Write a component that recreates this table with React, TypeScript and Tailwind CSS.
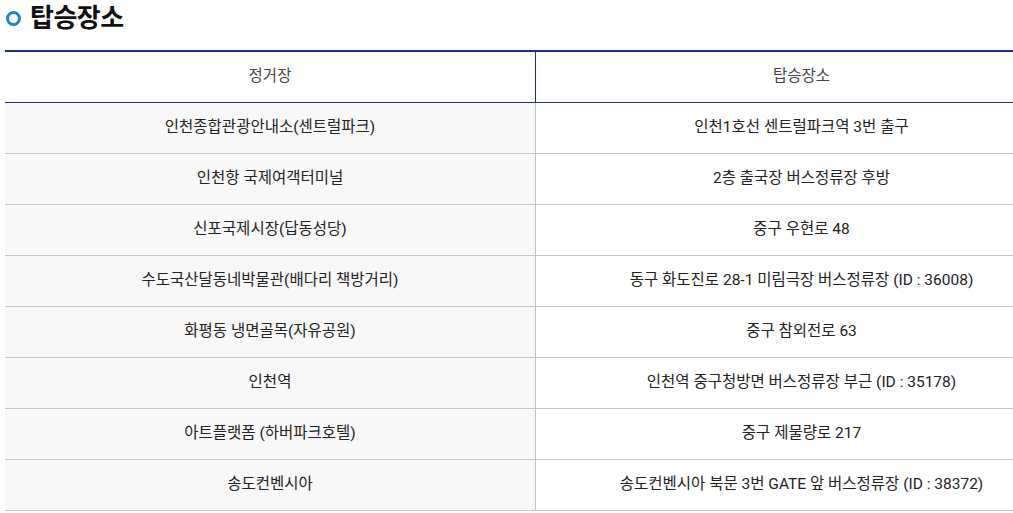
import React from "react";

const rows: [string, string][] = [
  ["인천종합관광안내소(센트럴파크)", "인천1호선 센트럴파크역 3번 출구"],
  ["인천항 국제여객터미널", "2층 출국장 버스정류장 후방"],
  ["신포국제시장(답동성당)", "중구 우현로 48"],
  ["수도국산달동네박물관(배다리 책방거리)", "동구 화도진로 28-1 미림극장 버스정류장 (ID : 36008)"],
  ["화평동 냉면골목(자유공원)", "중구 참외전로 63"],
  ["인천역", "인천역 중구청방면 버스정류장 부근 (ID : 35178)"],
  ["아트플랫폼 (하버파크호텔)", "중구 제물량로 217"],
  ["송도컨벤시아", "송도컨벤시아 북문 3번 GATE 앞 버스정류장 (ID : 38372)"],
];

export default function App() {
  return (
    <div
      className="w-[1013px] overflow-hidden bg-white text-[#222]"
      style={{ fontFamily: 'Roboto, "Noto Sans CJK KR", sans-serif' }}
    >
      <div className="flex items-center h-[36px] pl-[6px]">
        <span className="block w-[15px] h-[15px] rounded-full border-[3px] border-[#1a84d8]" />
        <h2 className="ml-[9px] text-[26px] font-bold leading-none text-[#111] tracking-[-0.5px]">
          탑승장소
        </h2>
      </div>
      <div className="h-[14px]" />
      <div className="ml-[5px] w-[1062px] border-t-2 border-[#1e2d8c]">
        <div className="grid grid-cols-[531px_531px] h-[51px] border-b border-[#1e2d8c] text-[15.5px] text-[#444]">
          <div className="flex items-center justify-center border-r border-[#1e2d8c]">정거장</div>
          <div className="flex items-center justify-center">탑승장소</div>
        </div>
        {rows.map(([a, b]) => (
          <div
            key={a}
            className="grid grid-cols-[531px_531px] h-[51px] border-b border-[#c4c4c4] text-[15.5px]"
          >
            <div className="flex items-center justify-center bg-[#f8f8f8] border-r border-[#c4c4c4]">
              {a}
            </div>
            <div className="flex items-center justify-center bg-white">{b}</div>
          </div>
        ))}
      </div>
    </div>
  );
}
